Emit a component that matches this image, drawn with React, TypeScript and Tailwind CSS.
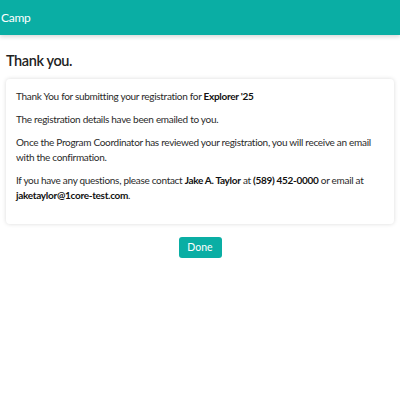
import React from "react";

export default function App() {
  return (
    <div className="w-[400px] h-[400px] bg-white" style={{ fontFamily: "Lato, 'Noto Sans', sans-serif" }}>
      <div className="h-[35px] bg-[#0aaea4] flex items-center shadow-[0_2px_4px_rgba(0,0,0,0.15)]">
        <span className="text-white text-[12px] tracking-[-0.3px] pl-[1px] leading-none">Camp</span>
      </div>
      <div className="px-[6px]">
        <h1 className="text-[14.5px] tracking-[-0.4px] font-semibold text-[#222] mt-[16px] leading-[20px]">Thank you.</h1>
        <div className="mt-[8px] rounded-[4px] bg-white shadow-[0_0_4px_rgba(0,0,0,0.15)] px-[10px] pt-[10px] pb-[21px] text-[10px] tracking-[-0.3px] leading-[15px] text-[#2a2a2a]">
          <p>Thank You for submitting your registration for <b className="font-bold text-[#111]">Explorer '25</b></p>
          <p className="mt-[8px]">The registration details have been emailed to you.</p>
          <p className="mt-[8px]">Once the Program Coordinator has reviewed your registration, you will receive an email with the confirmation.</p>
          <p className="mt-[8px]">If you have any questions, please contact <b className="font-bold text-[#111]">Jake A. Taylor</b> at <b className="font-bold text-[#111]">(589) 452-0000</b> or email at <b className="font-bold text-[#111]">jaketaylor@1core-test.com</b>.</p>
        </div>
        <div className="flex justify-center mt-[13px]">
          <button className="w-[43px] h-[21px] rounded-[3px] bg-[#0aaea4] text-white text-[10.5px] leading-none">Done</button>
        </div>
      </div>
    </div>
  );
}
